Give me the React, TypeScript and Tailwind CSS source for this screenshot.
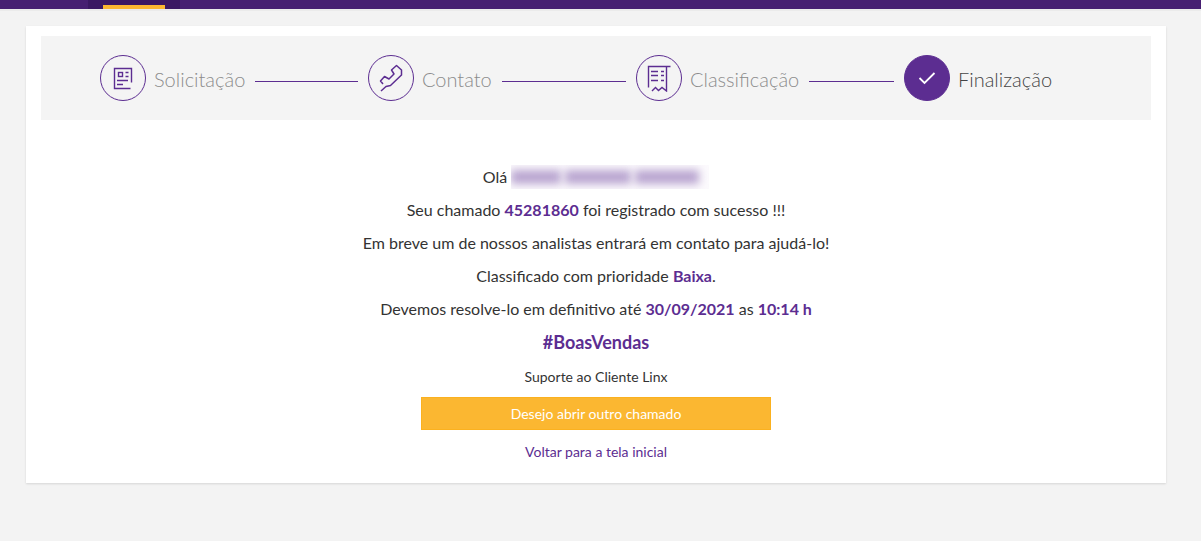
import React from 'react';
import clsx from 'clsx';

interface Step {
  label: string;
  icon: React.ReactNode;
  active?: boolean;
}

const FormIcon = () => (
  <svg viewBox="0 0 24 24" className="h-6 w-6" fill="none" stroke="currentColor" strokeWidth="1.4">
    <path d="M20.5 16.5V2.5H3.5V22.5H19.5" />
    <rect x="7.5" y="6.5" width="4" height="4" />
    <path d="M14.5 6.5h3M14.5 10.5h3M6 14.5h11M6 18.5h6" />
  </svg>
);

const PhoneIcon = () => (
  <svg viewBox="0 0 28 28" className="h-7 w-7" fill="none" stroke="currentColor" strokeWidth="1.5" strokeLinejoin="round">
    <path d="M4 27L9 22.5L13.5 21.5L24.5 11V6L19.5 1.5L14.5 6L17 10L12 15L7.5 12.5L3.5 17L6 20" />
  </svg>
);

const ReceiptIcon = () => (
  <svg viewBox="0 0 26 28" className="h-7 w-[26px]" fill="none" stroke="currentColor" strokeWidth="1.4">
    <path d="M24.5 2.5H2.5V23.5M20.5 2.5V27L16 23.5L12.5 26.5L9.5 23.5L6 27" />
    <path d="M5 7.5h7M15 7.5h3M5 11.5h7M15 11.5h3M5 16.5h7M15 16.5h3" />
  </svg>
);

const CheckIcon = () => (
  <svg viewBox="0 0 18 14" className="h-[14px] w-[18px]" fill="none" stroke="currentColor" strokeWidth="1.8">
    <path d="M1.5 7L6.5 12L16.5 2" />
  </svg>
);

const steps: Step[] = [
  { label: 'Solicitação', icon: <FormIcon /> },
  { label: 'Contato', icon: <PhoneIcon /> },
  { label: 'Classificação', icon: <ReceiptIcon /> },
  { label: 'Finalização', icon: <CheckIcon />, active: true },
];

const StepItem: React.FC<{ step: Step; last: boolean }> = ({ step, last }) => (
  <li className={clsx('flex items-center', last ? 'w-40 shrink-0' : 'flex-1')}>
    <span
      className={clsx(
        'flex h-[46px] w-[46px] shrink-0 items-center justify-center rounded-full border border-[#5c2d91]',
        step.active ? 'bg-[#5c2d91] text-white' : 'text-[#5c2d91]'
      )}
    >
      {step.icon}
    </span>
    <span
      className={clsx(
        'ml-2 pt-px font-["Lato"] text-xl leading-7 font-light whitespace-nowrap',
        step.active ? 'text-[#444444]' : 'text-[#8c8c8c]'
      )}
    >
      {step.label}
    </span>
    {!last && <span className="mx-[10px] mt-[6px] h-px flex-1 bg-[#5c2d91]" />}
  </li>
);

const Strong: React.FC<{ children: React.ReactNode }> = ({ children }) => (
  <strong className="font-bold text-[#5c2d91]">{children}</strong>
);

// Customer name is kept unreadable on this page
const HiddenName = () => (
  <span className="inline-flex h-6 w-[198px] items-center gap-1 overflow-hidden bg-[#fcfafd]">
    <span className="h-[14px] w-[50px] bg-[#b9a5d0] blur-xs" />
    <span className="h-[14px] w-[66px] bg-[#b9a5d0] blur-xs" />
    <span className="h-[14px] w-[64px] bg-[#b9a5d0] blur-xs" />
  </span>
);

export default function App() {
  return (
    <div className='min-h-screen bg-[#f3f3f3] font-["Lato",sans-serif] text-[#333333]'>
      <header className="h-[9px] bg-[#471f72] pl-[88px] shadow-[0_2px_0_#ebebeb]">
        <div className="flex h-full w-[92px] items-end justify-center bg-[#3b1863] pr-[15px] pl-[15px]">
          <span className="h-1 w-full bg-[#fbb731]" />
        </div>
      </header>

      <main className="mt-[17px] mr-[35px] ml-[26px] bg-white px-[15px] pt-[10px] pb-[21px] shadow-[0_1px_2px_rgba(0,0,0,0.12)]">
        <ol className="flex bg-[#f4f4f4] py-[19px] pr-[87px] pl-[59px]">
          {steps.map((step, i) => (
            <StepItem key={step.label} step={step} last={i === steps.length - 1} />
          ))}
        </ol>

        <section className="mt-10 flex flex-col items-center text-center text-base leading-[33px]">
          <p className="flex h-[33px] items-center gap-1">
            Olá <HiddenName />
          </p>
          <p>
            Seu chamado <Strong>45281860</Strong> foi registrado com sucesso !!!
          </p>
          <p>Em breve um de nossos analistas entrará em contato para ajudá-lo!</p>
          <p>
            Classificado com prioridade <Strong>Baixa</Strong>.
          </p>
          <p>
            Devemos resolve-lo em definitivo até <Strong>30/09/2021</Strong> as <Strong>10:14 h</Strong>
          </p>
          <p className="text-lg leading-[35px] font-bold text-[#5c2d91]">#BoasVendas</p>
          <p className="text-sm leading-[33px]">Suporte ao Cliente Linx</p>
          <button
            type="button"
            className="mt-1 h-[33px] w-[350px] max-w-full border border-[#fbb11f] bg-[#fbb731] text-sm text-white"
          >
            Desejo abrir outro chamado
          </button>
          <a href="#" className="mt-[11px] text-sm leading-[21px] text-[#5c2d91]">
            Voltar para a tela inicial
          </a>
        </section>
      </main>
    </div>
  );
}
